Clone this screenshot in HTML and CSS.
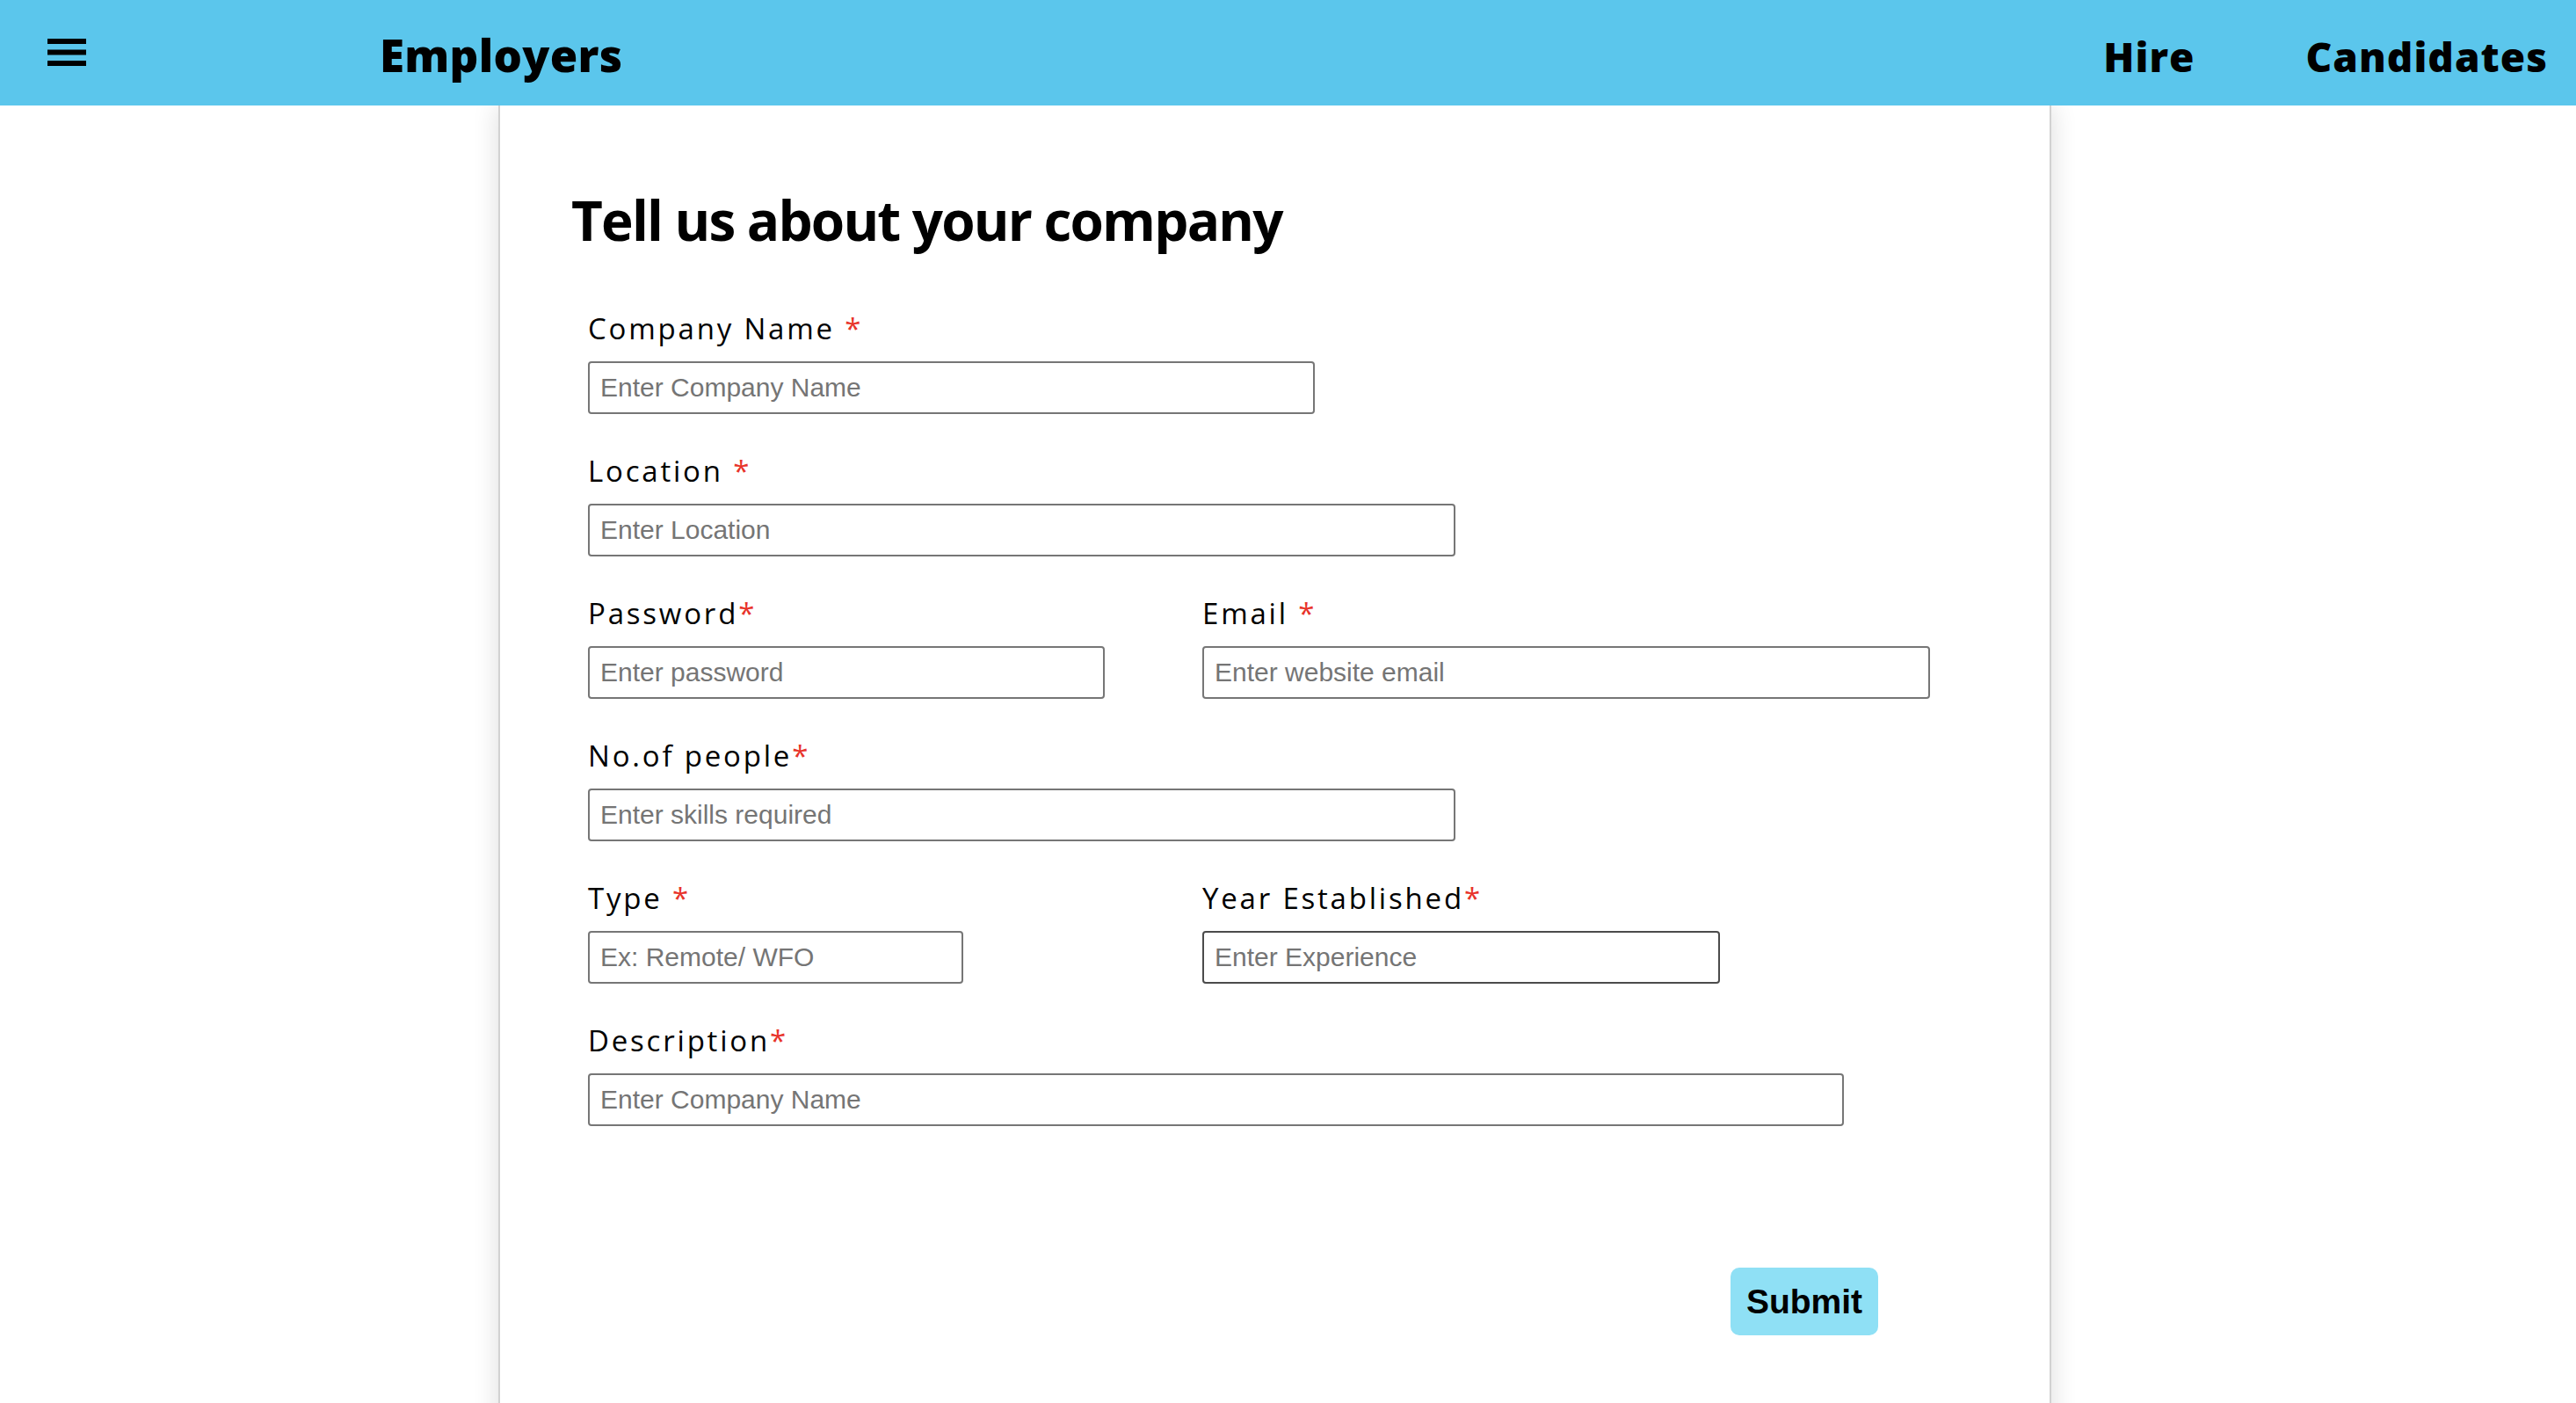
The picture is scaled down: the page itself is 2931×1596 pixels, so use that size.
FILE: index.html
```html
<!DOCTYPE html>
<html lang="en">
<head>
<meta charset="utf-8">
<title>Employers - Tell us about your company</title>
<link rel="stylesheet" href="styles.css">
</head>
<body>
<header class="topbar">
  <button class="menu-btn" aria-label="Menu">
    <svg width="44" height="32" viewBox="0 0 44 32" aria-hidden="true">
      <rect x="0" y="0" width="44" height="6" fill="#000"/>
      <rect x="0" y="12.5" width="44" height="6" fill="#000"/>
      <rect x="0" y="25" width="44" height="6" fill="#000"/>
    </svg>
  </button>
  <div class="brand">Employers</div>
  <nav class="nav">
    <a class="nav-link" href="#">Hire</a>
    <a class="nav-link" href="#">Candidates</a>
  </nav>
</header>

<main class="card">
  <h1 class="title">Tell us about your company</h1>
  <form class="form">
    <div class="field">
      <label class="label">Company Name <span class="req">*</span></label>
      <input class="input w-name" type="text" placeholder="Enter Company Name">
    </div>
    <div class="field">
      <label class="label">Location <span class="req">*</span></label>
      <input class="input w-wide" type="text" placeholder="Enter Location">
    </div>
    <div class="row">
      <div class="field">
        <label class="label">Password<span class="req">*</span></label>
        <input class="input w-pass" type="text" placeholder="Enter password">
      </div>
      <div class="field">
        <label class="label">Email <span class="req">*</span></label>
        <input class="input w-email" type="text" placeholder="Enter website email">
      </div>
    </div>
    <div class="field">
      <label class="label">No.of people<span class="req">*</span></label>
      <input class="input w-wide" type="text" placeholder="Enter skills required">
    </div>
    <div class="row">
      <div class="field">
        <label class="label">Type <span class="req">*</span></label>
        <input class="input w-type" type="text" placeholder="Ex: Remote/ WFO">
      </div>
      <div class="field">
        <label class="label">Year Established<span class="req">*</span></label>
        <input class="input w-year input-hover" type="text" placeholder="Enter Experience">
      </div>
    </div>
    <div class="field">
      <label class="label">Description<span class="req">*</span></label>
      <input class="input w-desc" type="text" placeholder="Enter Company Name">
    </div>
    <div class="actions">
      <button class="submit" type="button">Submit</button>
    </div>
  </form>
</main>
</body>
</html>
```

FILE: styles.css
```css
html, body {
  margin: 0;
  padding: 0;
  background: #ffffff;
}

body {
  font-family: "Open Sans", "Liberation Sans", sans-serif;
  color: #000;
  overflow: hidden;
}

.topbar {
  position: relative;
  z-index: 2;
  height: 120px;
  background: #5bc6ec;
  display: flex;
  align-items: center;
  box-sizing: border-box;
  padding: 0 32px 0 54px;
}

.menu-btn {
  border: 0;
  background: none;
  padding: 0;
  margin: 0;
  width: 44px;
  height: 32px;
  display: flex;
}

.brand {
  margin-left: 334px;
  font-family: "Open Sans", sans-serif;
  font-weight: 800;
  font-size: 51px;
  line-height: 60px;
  padding-top: 4px;
  letter-spacing: 0.3px;
}

.nav {
  margin-left: auto;
  display: flex;
  gap: 126px;
  padding-top: 8px;
}

.nav-link {
  color: #000;
  text-decoration: none;
  font-family: "Open Sans", sans-serif;
  font-weight: 800;
  font-size: 46px;
  line-height: 56px;
  letter-spacing: 1px;
}

.card {
  position: relative;
  z-index: 1;
  margin-left: 567px;
  width: 1767px;
  min-height: 1560px;
  box-sizing: border-box;
  background: #fff;
  border-left: 2px solid #d2d2d2;
  border-right: 2px solid #d2d2d2;
  box-shadow: 0 0 28px rgba(0, 0, 0, 0.14);
  padding: 93px 0 0 81px;
}

.title {
  margin: 0;
  font-family: "Open Sans", sans-serif;
  font-weight: 700;
  font-size: 62px;
  line-height: 74px;
  letter-spacing: -1.8px;
}

.form {
  margin-top: 62px;
  padding-left: 19px;
}

.row {
  display: grid;
  grid-template-columns: 699px auto;
}

.field {
  display: flex;
  flex-direction: column;
  align-items: flex-start;
  margin-bottom: 40px;
}

.label {
  font-family: "Open Sans", sans-serif;
  font-weight: 400;
  font-size: 33px;
  line-height: 50px;
  letter-spacing: 2.8px;
  margin-bottom: 12px;
}

.req {
  color: #e8342b;
}

.input {
  box-sizing: border-box;
  height: 60px;
  border: 2px solid #767676;
  border-radius: 4px;
  padding: 0 12px;
  font-family: "Liberation Sans", Arial, sans-serif;
  font-size: 30px;
  color: #000;
  background: #fff;
  outline: none;
}

.input::placeholder {
  color: #757575;
}

.input-hover {
  border-color: #4b4b4b;
}

.w-name { width: 827px; }
.w-wide { width: 987px; }
.w-pass { width: 588px; }
.w-email { width: 828px; }
.w-type { width: 427px; }
.w-year { width: 589px; }
.w-desc { width: 1429px; }

.actions {
  width: 1468px;
  display: flex;
  justify-content: flex-end;
  margin-top: 161px;
}

.submit {
  width: 168px;
  height: 77px;
  border: 0;
  border-radius: 10px;
  background: #8fe0f5;
  color: #000;
  font-family: "Liberation Sans", Arial, sans-serif;
  font-weight: 700;
  font-size: 39px;
  padding: 0;
}
```
